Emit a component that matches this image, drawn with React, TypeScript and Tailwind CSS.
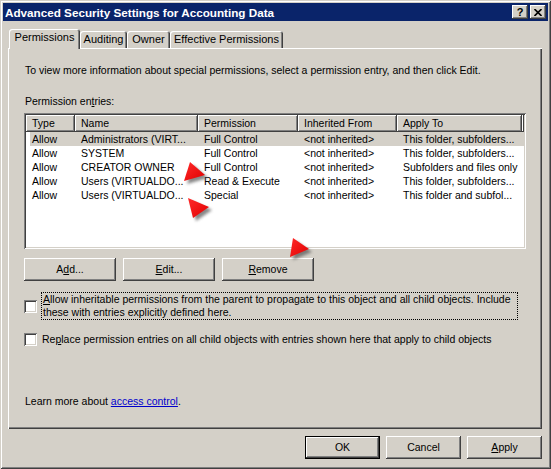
import React from 'react'

const raised =
  'bg-[#d4d0c8] shadow-[inset_-1px_-1px_#404040,inset_1px_1px_#ffffff,inset_-2px_-2px_#808080,inset_2px_2px_#d4d0c8]'
const sunken =
  'bg-white shadow-[inset_1px_1px_#808080,inset_-1px_-1px_#ffffff,inset_2px_2px_#404040,inset_-2px_-2px_#d4d0c8]'

const cols = [49, 123, 100, 99, 125]
const headers = ['Type', 'Name', 'Permission', 'Inherited From', 'Apply To']
const rows = [
  ['Allow', 'Administrators (VIRT...', 'Full Control', '<not inherited>', 'This folder, subfolders...'],
  ['Allow', 'SYSTEM', 'Full Control', '<not inherited>', 'This folder, subfolders...'],
  ['Allow', 'CREATOR OWNER', 'Full Control', '<not inherited>', 'Subfolders and files only'],
  ['Allow', 'Users (VIRTUALDO...', 'Read & Execute', '<not inherited>', 'This folder, subfolders...'],
  ['Allow', 'Users (VIRTUALDO...', 'Special', '<not inherited>', 'This folder and subfol...'],
]

function Btn({ children, w = 'w-[92px]', def = false }: { children: React.ReactNode; w?: string; def?: boolean }) {
  if (def)
    return (
      <div className={`${w} h-[23px] border border-black`}>
        <div className={`${raised} w-full h-full flex items-center justify-center`}>{children}</div>
      </div>
    )
  return <div className={`${raised} ${w} h-[23px] flex items-center justify-center`}>{children}</div>
}

function Tab({ label, w, active = false }: { label: string; w: string; active?: boolean }) {
  return (
    <div
      className={`${w} ${active ? 'h-[20px] -mb-px relative z-10 pb-[3px]' : 'h-[17px]'} bg-[#d4d0c8] rounded-t-[3px] flex items-center justify-center text-[11px] shadow-[inset_1px_1px_#ffffff,inset_-1px_0_#404040,inset_-2px_0_#808080]`}
    >
      {label}
    </div>
  )
}

function Check() {
  return <div className={`${sunken} w-[13px] h-[13px] shrink-0`} />
}

export default function App() {
  return (
    <div
      className="relative w-[551px] h-[469px] bg-[#d4d0c8] p-[3px] flex flex-col text-[10.5px] leading-[13px] text-black shadow-[inset_1px_1px_#d4d0c8,inset_-1px_-1px_#404040,inset_2px_2px_#ffffff,inset_-2px_-2px_#808080]"
      style={{ fontFamily: '"Liberation Sans", Arial, sans-serif' }}
    >
      {/* title bar */}
      <div className="h-[18px] bg-[#0a246a] flex items-center justify-between pl-[2px] pr-[2px]">
        <span className="text-white font-bold text-[11.7px]">Advanced Security Settings for Accounting Data</span>
        <div className="flex gap-[2px]">
          <div className={`${raised} w-[16px] h-[14px] flex items-center justify-center font-bold text-[11px] leading-none`}>?</div>
          <div className={`${raised} w-[16px] h-[14px] flex items-center justify-center`}>
            <svg width="8" height="7" viewBox="0 0 8 7">
              <path d="M0.5 0 L7.5 7 M7.5 0 L0.5 7" stroke="black" strokeWidth="1.6" fill="none" />
            </svg>
          </div>
        </div>
      </div>

      <div className="flex-1 flex flex-col pl-[5px] pr-[6px] pt-[8px]">
        {/* tabs */}
        <div className="flex items-end pl-px h-[19px]">
          <Tab label="Permissions" w="w-[71px]" active />
          <Tab label="Auditing" w="w-[47px]" />
          <Tab label="Owner" w="w-[43px]" />
          <Tab label="Effective Permissions" w="w-[113px]" />
        </div>

        {/* panel */}
        <div className="h-[381px] flex flex-col pl-[16px] pt-[16px] shadow-[inset_1px_1px_#ffffff,inset_-1px_-1px_#404040,inset_-2px_-2px_#808080]">
          <p className="ml-px">To view more information about special permissions, select a permission entry, and then click Edit.</p>
          <p className="ml-px mt-[18px]">
            Permission en<span className="underline">t</span>ries:
          </p>

          <div className={`${sunken} mt-[5px] w-[502px] h-[136px] p-[2px] flex flex-col`}>
            <div className="flex h-[17px]">
              {headers.map((h, i) => (
                <div key={h} className={`${raised} h-full flex items-center pl-[6px]`} style={{ width: cols[i] }}>
                  {h}
                </div>
              ))}
              <div className={`${raised} flex-1 h-full`} />
            </div>
            {rows.map((r, ri) => (
              <div key={ri} className="relative flex h-[14px] items-center">
                {ri === 0 && <div className="absolute left-[4px] right-0 top-0 bottom-0 bg-[#d4d0c8]" />}
                {r.map((c, ci) => (
                  <div key={ci} className="relative whitespace-nowrap pl-[6px]" style={{ width: cols[ci] }}>
                    {c}
                  </div>
                ))}
              </div>
            ))}
          </div>

          <div className="flex gap-[7px] mt-[9px]">
            <Btn>
              A<span className="underline">d</span>d...
            </Btn>
            <Btn>
              <span className="underline">E</span>dit...
            </Btn>
            <Btn>
              <span className="underline">R</span>emove
            </Btn>
          </div>

          <div className="flex items-center gap-[4px] mt-[11px]">
            <Check />
            <div className="w-[477px] border border-dotted border-black px-px">
              <span className="underline">A</span>llow inheritable permissions from the parent to propagate to this object and all child objects. Include these with entries explicitly defined here.
            </div>
          </div>

          <div className="flex items-center gap-[5px] mt-[13px] h-[13px]">
            <Check />
            <span>
              Re<span className="underline">p</span>lace permission entries on all child objects with entries shown here that apply to child objects
            </span>
          </div>

          <p className="ml-px mt-[49px]">
            Learn more about <span className="text-[#0000cc] underline">access control</span>.
          </p>
        </div>

        {/* dialog buttons */}
        <div className="flex justify-end gap-[6px] mt-[7px]">
          <Btn w="w-[75px]" def>
            OK
          </Btn>
          <Btn w="w-[75px]">Cancel</Btn>
          <Btn w="w-[75px]">
            <span className="underline">A</span>pply
          </Btn>
        </div>
      </div>

      {/* red callout arrows */}
      <svg className="absolute left-0 top-0 pointer-events-none" width="551" height="469">
        <defs>
          <filter id="sh" x="-50%" y="-50%" width="200%" height="200%">
            <feGaussianBlur stdDeviation="1.6" />
          </filter>
          <linearGradient id="rg" x1="0" y1="0" x2="1" y2="1">
            <stop offset="0" stopColor="#ff2a2a" />
            <stop offset="1" stopColor="#e00000" />
          </linearGradient>
        </defs>
        {[
          '190,162 205,175 184,181',
          '188,198 209,207 193,218',
          '293,238 309,249 290,257',
        ].map((p, i) => (
          <g key={i}>
            <polygon points={p} fill="#555" opacity="0.7" filter="url(#sh)" transform="translate(3,3)" />
            <polygon points={p} fill="url(#rg)" />
          </g>
        ))}
      </svg>
    </div>
  )
}
